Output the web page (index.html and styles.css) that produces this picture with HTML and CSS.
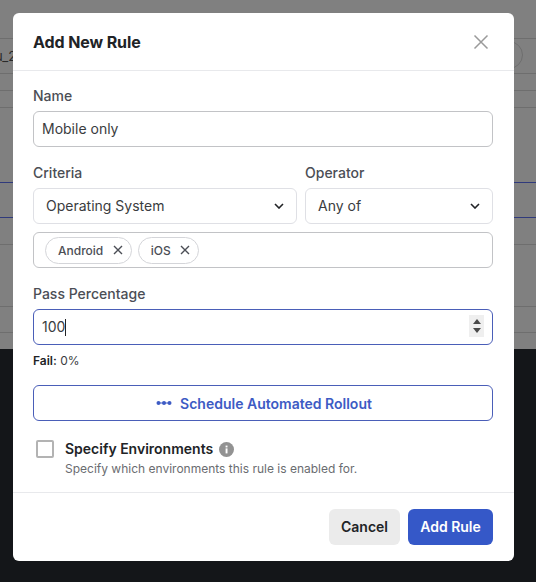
FILE: index.html
```html
<!DOCTYPE html>
<html lang="en">
<head>
<meta charset="utf-8">
<title>Add New Rule</title>
<link rel="stylesheet" href="styles.css">
</head>
<body>
<div class="backdrop">
  <div class="bg-upper">
    <div class="bg-row h38"></div>
    <div class="bg-row h35 name-row"><span class="bg-text">u_2</span><span class="bg-pill"></span></div>
    <div class="bg-row h17"></div>
    <div class="bg-row h17"></div>
    <div class="bg-row h75 blue"></div>
    <div class="bg-row h35 blue"></div>
    <div class="bg-row h27"></div>
    <div class="bg-row h62"></div>
    <div class="bg-row h26"></div>
    <div class="bg-row h17 last"></div>
  </div>
  <div class="bg-lower"></div>
</div>
<div class="modal">
  <header class="modal-head">
    <h1>Add New Rule</h1>
    <svg class="close" width="16" height="16" viewBox="0 0 16 16"><path d="M1.5 1.5l13 13M14.5 1.5l-13 13"/></svg>
  </header>
  <div class="modal-body">
    <label class="label">Name</label>
    <div class="field field-grey"><span class="val">Mobile only</span></div>
    <div class="cols">
      <div class="col-criteria">
        <label class="label">Criteria</label>
        <div class="field field-light select"><span class="val">Operating System</span>
          <svg class="chev" width="10" height="6" viewBox="0 0 10 6"><path d="M1 1l4 4 4-4"/></svg>
        </div>
      </div>
      <div class="col-op">
        <label class="label">Operator</label>
        <div class="field field-light select"><span class="val">Any of</span>
          <svg class="chev" width="10" height="6" viewBox="0 0 10 6"><path d="M1 1l4 4 4-4"/></svg>
        </div>
      </div>
    </div>
    <div class="field field-grey tags">
      <span class="tag">Android<svg width="10" height="10" viewBox="0 0 10 10"><path d="M1 1l8 8M9 1l-8 8"/></svg></span>
      <span class="tag">iOS<svg width="10" height="10" viewBox="0 0 10 10"><path d="M1 1l8 8M9 1l-8 8"/></svg></span>
    </div>
    <label class="label label-pass">Pass Percentage</label>
    <div class="field field-focus"><span class="val">100</span><span class="caret"></span>
      <span class="spin">
        <svg width="8" height="5" viewBox="0 0 8 5"><path d="M4 0l4 5H0z"/></svg>
        <svg width="8" height="5" viewBox="0 0 8 5"><path d="M0 0h8L4 5z"/></svg>
      </span>
    </div>
    <p class="fail"><b>Fail:</b> 0%</p>
    <button class="rollout" type="button">
      <svg width="16" height="6" viewBox="0 0 16 6"><path class="line" d="M2 3h12"/><circle cx="2.5" cy="3" r="2"/><circle cx="8" cy="3" r="2"/><circle cx="13.5" cy="3" r="2"/></svg>
      Schedule Automated Rollout
    </button>
    <div class="envs">
      <span class="check"></span>
      <div>
        <div class="env-title">Specify Environments
          <svg class="info" width="15" height="15" viewBox="0 0 15 15"><circle cx="7.5" cy="7.5" r="7.5"/><rect x="6.6" y="6.4" width="1.9" height="5" fill="#fff"/><rect x="6.6" y="3.6" width="1.9" height="1.8" fill="#fff"/></svg>
        </div>
        <div class="env-sub">Specify which environments this rule is enabled for.</div>
      </div>
    </div>
  </div>
  <footer class="modal-foot">
    <button class="btn btn-cancel" type="button">Cancel</button>
    <button class="btn btn-add" type="button">Add Rule</button>
  </footer>
</div>
</body>
</html>
```

FILE: styles.css
```css
* { box-sizing: border-box; }
html, body { margin: 0; padding: 0; height: 100%; }
body {
  width: 536px;
  height: 582px;
  overflow: hidden;
  position: relative;
  font-family: Inter, "Liberation Sans", sans-serif;
  color: #212326;
}
.backdrop { height: 582px; display: flex; flex-direction: column; }
.bg-upper { height: 349px; background: #808080; flex: none; }
.bg-lower { flex: 1; background: #141619; }
.bg-row { border-bottom: 1px solid #6e6e6e; position: relative; }
.bg-row.blue { border-bottom-color: #303a7c; }
.bg-row.last { border-bottom: 0; }
.h38 { height: 39px; }
.h35 { height: 35px; }
.h17 { height: 17px; }
.h75 { height: 75px; }
.h27 { height: 27px; }
.h62 { height: 62px; }
.h26 { height: 26px; }
.name-row { display: flex; justify-content: space-between; align-items: center; }
.bg-text { font-size: 13px; color: #2a2a2a; margin-left: -5px; }
.bg-pill { width: 40px; height: 28px; border: 1px solid #6e6e6e; border-radius: 14px; margin-right: 13px; margin-top: -3px; }

.modal {
  position: absolute;
  left: 13px;
  top: 13px;
  width: 501px;
  height: 548px;
  background: #fff;
  border-radius: 6px;
  display: flex;
  flex-direction: column;
}
.modal-head {
  height: 58px;
  flex: none;
  padding: 0 25px 0 20px;
  display: flex;
  align-items: center;
  justify-content: space-between;
  border-bottom: 1px solid #e8e9ec;
}
.modal-head h1 { margin: 0; font-size: 16px; line-height: 20px; font-weight: 700; color: #212326; letter-spacing: -0.1px; }
.close path { stroke: #9a9a9a; stroke-width: 1.5; fill: none; }
.modal-body { flex: 1; padding: 16px 21px 0 20px; display: flex; flex-direction: column; }
.label { display: block; font-size: 14px; line-height: 17px; font-weight: 500; color: #4b4e55; margin-bottom: 7px; }
.label-pass { margin-top: 17px; }
.field {
  height: 36px;
  border-radius: 6px;
  font-size: 14px;
  color: #3a3c40;
  display: flex;
  align-items: center;
  padding: 0 8px;
  background: #fff;
  position: relative;
}
.val { position: relative; top: -1px; }
.field-grey { border: 1px solid #c2c3c6; }
.field-light { border: 1px solid #dfe0e5; }
.field-focus { border: 1px solid #4a5eb8; }
.cols { display: flex; gap: 8px; margin-top: 17px; }
.col-criteria { width: 264px; }
.col-op { width: 188px; }
.select { padding: 0 12px; justify-content: space-between; }
.chev path { stroke: #212326; stroke-width: 1.6; fill: none; }
.tags { margin-top: 8px; gap: 6px; padding: 0 11px; }
.tag {
  height: 27px;
  border: 1px solid #d4d5d9;
  border-radius: 14px;
  padding: 0 8px 0 12px;
  display: inline-flex;
  align-items: center;
  gap: 9.5px;
  font-size: 12px;
  font-weight: 500;
  color: #4b4e55;
}
.tag svg path { stroke: #4b4e55; stroke-width: 1.4; fill: none; }
.caret { width: 1px; height: 17px; background: #212326; }
.spin {
  position: absolute;
  right: 8px;
  top: 5px;
  width: 15px;
  height: 22px;
  background: #efefef;
  display: flex;
  flex-direction: column;
  align-items: center;
  justify-content: center;
  gap: 4px;
}
.spin svg path { fill: #4a4a4a; }
.fail { margin: 8px 0 0; font-size: 12px; line-height: 15px; color: #3a3c40; }
.fail b { font-weight: 600; color: #212326; }
.rollout {
  margin-top: 17px;
  height: 36px;
  border: 1px solid #4a5eb8;
  border-radius: 6px;
  background: #fff;
  color: #3d5bc4;
  font: 600 14px Inter, "Liberation Sans", sans-serif;
  display: flex;
  align-items: center;
  justify-content: center;
  gap: 8px;
  padding: 0 0 0 2px;
}
.rollout svg circle { fill: #3d5bc4; }
.rollout .line { stroke: #3d5bc4; stroke-width: 1; }
.envs { display: flex; gap: 11px; margin-top: 19px; padding-left: 3px; }
.check { width: 18px; height: 18px; border: 2px solid #b3b3b3; border-radius: 2px; flex: none; }
.env-title { font-size: 14px; line-height: 18px; font-weight: 600; color: #212326; display: flex; align-items: center; gap: 6px; }
.info circle { fill: #929292; }
.env-sub { font-size: 12px; line-height: 15px; color: #6a6c70; margin-top: 3px; }
.modal-foot {
  height: 69px;
  flex: none;
  border-top: 1px solid #e8e9ec;
  padding: 16px 21px 0 0;
  display: flex;
  justify-content: flex-end;
  gap: 8px;
}
.btn {
  height: 36px;
  border: 0;
  border-radius: 6px;
  font: 600 14px Inter, "Liberation Sans", sans-serif;
  padding: 0 0 2px;
}
.btn-cancel { width: 71px; background: #ebebeb; color: #212326; }
.btn-add { width: 85px; background: #3558c8; color: #fff; }
```
